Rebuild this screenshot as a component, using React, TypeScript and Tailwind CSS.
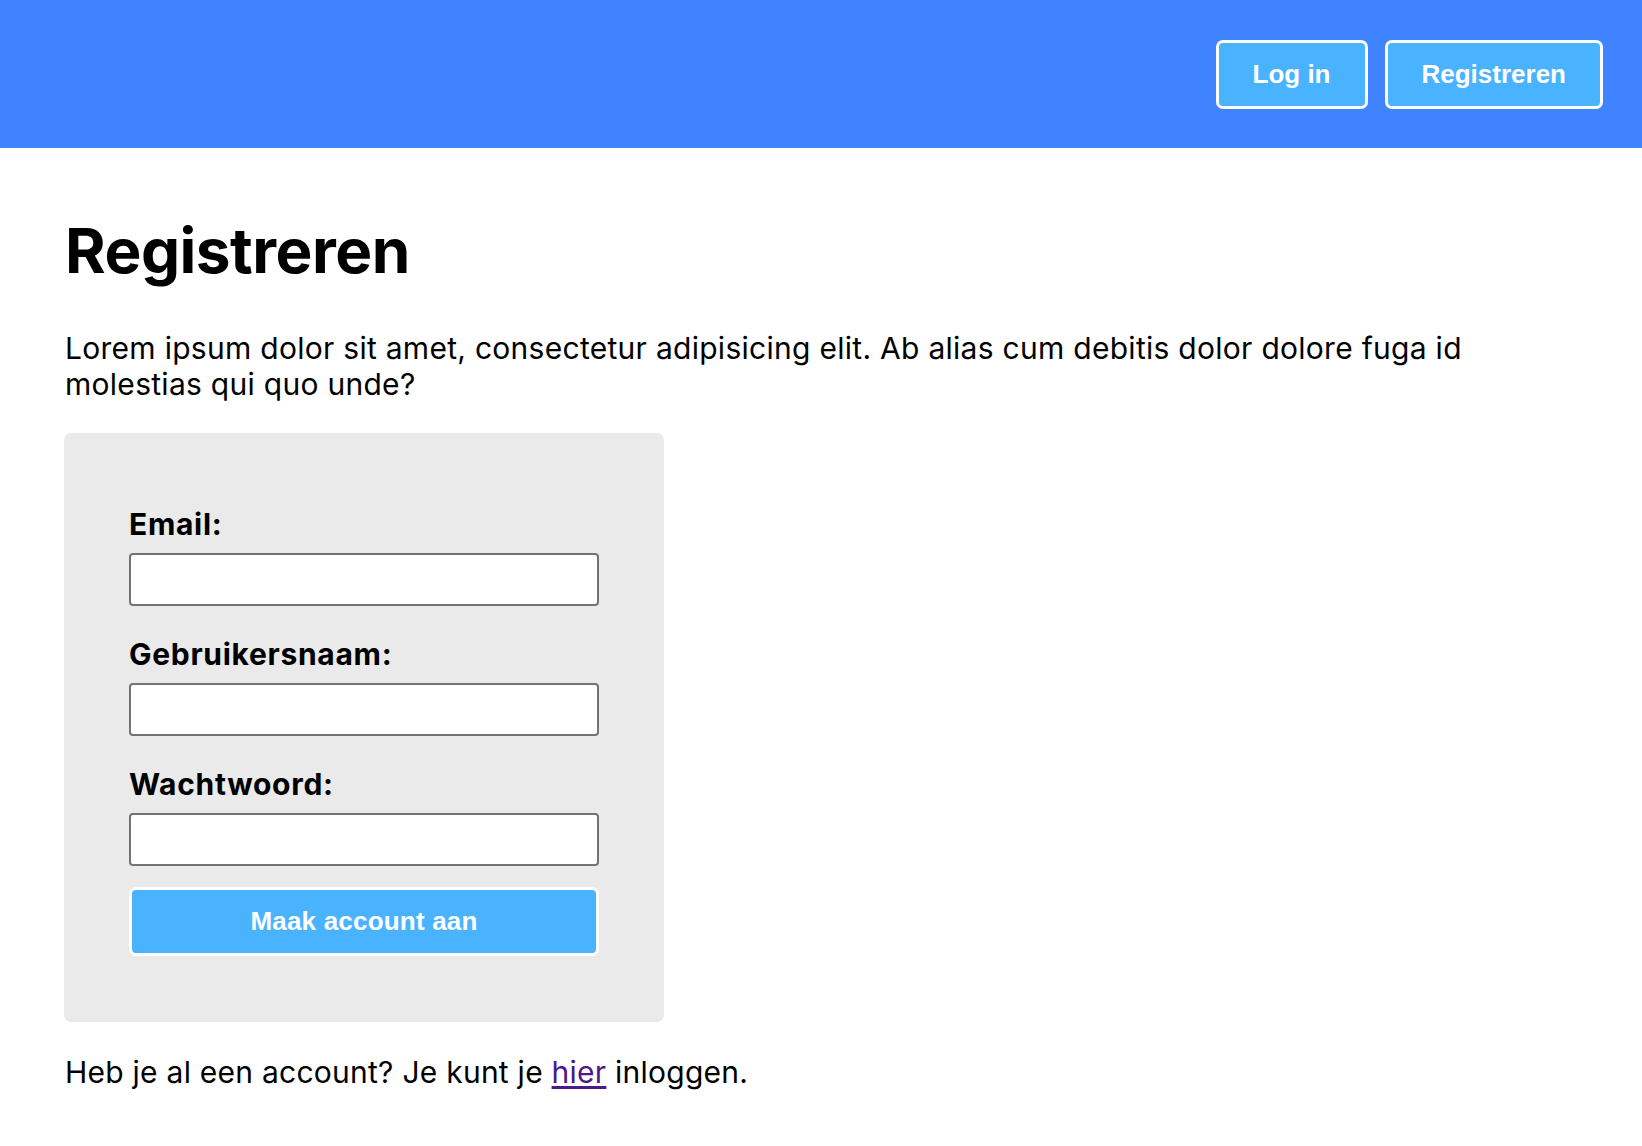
export default function App() {
  const fields = [
    { id: 'email', label: 'Email:', type: 'email' },
    { id: 'username', label: 'Gebruikersnaam:', type: 'text' },
    { id: 'password', label: 'Wachtwoord:', type: 'password' },
  ]

  return (
    <div className="min-h-screen bg-white text-black font-['Inter',sans-serif]">
      <header className="h-[148px] bg-[#4083ff] flex items-center justify-end gap-[17px] pr-[39px]">
        <button className="h-[69px] px-[34px] rounded-[7px] border-[3px] border-white bg-[#4ab3ff] text-white text-[26px] font-bold font-['Liberation_Sans',Arial,sans-serif]">
          Log in
        </button>
        <button className="h-[69px] px-[34px] rounded-[7px] border-[3px] border-white bg-[#4ab3ff] text-white text-[26px] font-bold font-['Liberation_Sans',Arial,sans-serif]">
          Registreren
        </button>
      </header>

      <main className="px-[65px] pt-[65px] pb-10">
        <h1 className="text-[62px] font-bold leading-[76px] tracking-[-0.5px]">Registreren</h1>
        <p className="mt-[41px] text-[30px] leading-[36px] tracking-[0.28px] max-w-[1440px]">
          Lorem ipsum dolor sit amet, consectetur adipisicing elit. Ab alias cum debitis dolor dolore fuga id
          molestias qui quo unde?
        </p>

        <form
          className="mt-[31px] -ml-px w-[600px] bg-[#eaeaea] rounded-[7px] px-[65px] pt-[73px] pb-[66px] flex flex-col"
          onSubmit={(e) => e.preventDefault()}
        >
          {fields.map((f, i) => (
            <div key={f.id} className={i > 0 ? 'mt-[30px] flex flex-col' : 'flex flex-col'}>
              <label htmlFor={f.id} className="text-[30px] leading-[36px] font-bold tracking-[0.7px]">
                {f.label}
              </label>
              <input
                id={f.id}
                type={f.type}
                className="mt-[11px] h-[53px] w-full bg-white border-2 border-[#737373] rounded-[4px] px-2 text-[24px]"
              />
            </div>
          ))}
          <button
            type="submit"
            className="mt-[21px] h-[69px] w-full rounded-[7px] border-[3px] border-white bg-[#4ab3ff] text-white text-[26px] tracking-[0.2px] font-bold font-['Liberation_Sans',Arial,sans-serif]"
          >
            Maak account aan
          </button>
        </form>

        <p className="mt-[32px] text-[30px] leading-[36px] tracking-[0.25px]">
          Heb je al een account? Je kunt je{' '}
          <a href="#" className="text-[#4b1a8a] underline underline-offset-[3px]">
            hier
          </a>{' '}
          inloggen.
        </p>
      </main>
    </div>
  )
}
